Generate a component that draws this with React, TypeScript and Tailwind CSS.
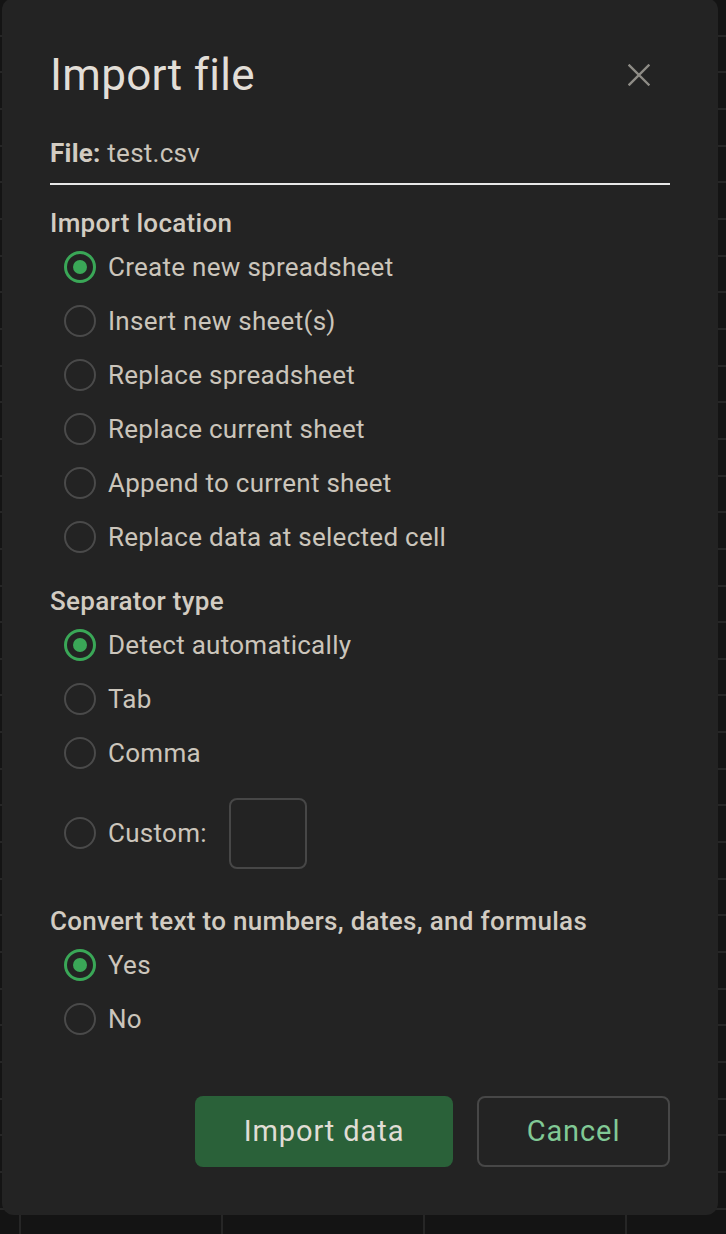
import { useState } from 'react';

type Option = { id: string; label: string };

const LOCATIONS: Option[] = [
  { id: 'new', label: 'Create new spreadsheet' },
  { id: 'insert', label: 'Insert new sheet(s)' },
  { id: 'replace', label: 'Replace spreadsheet' },
  { id: 'current', label: 'Replace current sheet' },
  { id: 'append', label: 'Append to current sheet' },
  { id: 'cell', label: 'Replace data at selected cell' },
];

const SEPARATORS: Option[] = [
  { id: 'auto', label: 'Detect automatically' },
  { id: 'tab', label: 'Tab' },
  { id: 'comma', label: 'Comma' },
];

const CONVERT: Option[] = [
  { id: 'yes', label: 'Yes' },
  { id: 'no', label: 'No' },
];

function Radio({ checked }: { checked: boolean }) {
  return checked ? (
    <span className="flex h-[32px] w-[32px] shrink-0 items-center justify-center rounded-full border-[3px] border-[#3aa757]">
      <span className="h-[14px] w-[14px] rounded-full bg-[#3aa757]" />
    </span>
  ) : (
    <span className="h-[32px] w-[32px] shrink-0 rounded-full border-2 border-[#4a4a4a]" />
  );
}

function RadioRow({ label, checked, onPick }: { label: string; checked: boolean; onPick: () => void }) {
  return (
    <button type="button" onClick={onPick} className="ml-[14px] flex h-[54px] items-center gap-[12px] text-left">
      <Radio checked={checked} />
      <span className="text-[26px] leading-[32px] tracking-[0.28px] text-[#cbc5bb]">{label}</span>
    </button>
  );
}

function Heading({ children, className = '' }: { children: string; className?: string }) {
  return (
    <h3 className={`text-[26px] leading-[32px] font-medium tracking-[0.3px] text-[#d2ccc2] ${className}`}>{children}</h3>
  );
}

/** Fondo de hoja de cálculo detrás del diálogo. */
function SheetBackdrop() {
  return (
    <div className="flex flex-col">
      {Array.from({ length: 34 }).map((_, r) => (
        <div key={r} className="flex h-[36.67px] border-b-2 border-[#262626]">
          <div className="w-[21px] shrink-0 border-r-2 border-[#262626]" />
          {Array.from({ length: 4 }).map((_, c) => (
            <div key={c} className="w-[202px] shrink-0 border-r-2 border-[#262626]" />
          ))}
        </div>
      ))}
    </div>
  );
}

export default function App() {
  const [location, setLocation] = useState('new');
  const [separator, setSeparator] = useState('auto');
  const [convert, setConvert] = useState('yes');

  return (
    <div className="relative h-[1234px] w-[726px] overflow-hidden bg-[#141414] font-['Roboto','Liberation_Sans',sans-serif]">
      <SheetBackdrop />

      <div className="absolute left-[2px] top-[-2px] flex h-[1217px] w-[716px] flex-col rounded-[12px] bg-[#232323] px-[48px] pt-[51px]">
        <div className="flex h-[52px] items-center justify-between">
          <h2 className="text-[44px] leading-[52px] font-normal tracking-[0.3px] text-[#e2ded7]">Import file</h2>
          <svg width="22" height="22" viewBox="0 0 22 22" className="mr-[20px]" aria-label="Close">
            <path d="M1.5 1.5 L20.5 20.5 M20.5 1.5 L1.5 20.5" stroke="#8e8c86" strokeWidth="2.4" strokeLinecap="square" />
          </svg>
        </div>

        <div className="mt-[36px] border-b-2 border-[#e8e8e8] pb-[14px] text-[26px] leading-[32px] tracking-[0.25px] text-[#cbc5bb]">
          <span className="font-bold text-[#d2ccc2]">File:</span> test.csv
        </div>

        <Heading className="mt-[22px]">Import location</Heading>
        <div className="mt-[1px] flex flex-col">
          {LOCATIONS.map((o) => (
            <RadioRow key={o.id} label={o.label} checked={location === o.id} onPick={() => setLocation(o.id)} />
          ))}
        </div>

        <Heading className="mt-[21px]">Separator type</Heading>
        <div className="mt-[1px] flex flex-col">
          {SEPARATORS.map((o) => (
            <RadioRow key={o.id} label={o.label} checked={separator === o.id} onPick={() => setSeparator(o.id)} />
          ))}
          <div className="flex h-[106px] items-center">
            <RadioRow label="Custom:" checked={separator === 'custom'} onPick={() => setSeparator('custom')} />
            <input
              className="ml-[22px] h-[71px] w-[78px] rounded-[8px] border-2 border-[#474747] bg-transparent px-2 text-[26px] text-[#cbc5bb] outline-none"
              aria-label="Custom separator"
            />
          </div>
        </div>

        <Heading className="mt-[19px]">Convert text to numbers, dates, and formulas</Heading>
        <div className="mt-[1px] flex flex-col">
          {CONVERT.map((o) => (
            <RadioRow key={o.id} label={o.label} checked={convert === o.id} onPick={() => setConvert(o.id)} />
          ))}
        </div>

        <div className="mt-[50px] flex justify-end gap-[24px]">
          <button
            type="button"
            className="h-[71px] w-[258px] rounded-[8px] bg-[#2a6139] text-[29px] font-normal tracking-[0.9px] text-[#e0ddd5]"
          >
            Import data
          </button>
          <button
            type="button"
            className="h-[71px] w-[193px] rounded-[8px] border-2 border-[#474747] text-[29px] font-normal tracking-[0.9px] text-[#81c995]"
          >
            Cancel
          </button>
        </div>
      </div>
    </div>
  );
}
